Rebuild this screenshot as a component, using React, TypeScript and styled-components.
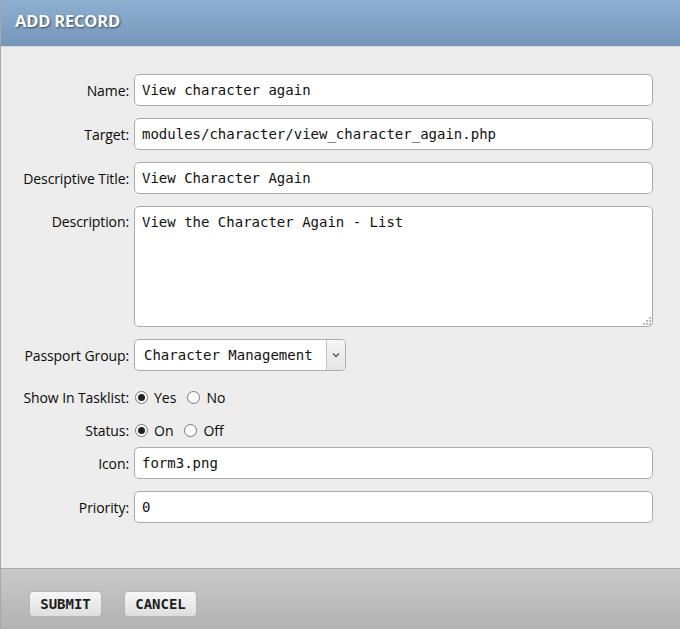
import styled, { createGlobalStyle } from "styled-components";

const GlobalStyle = createGlobalStyle`
    html, body {
        margin: 0;
        padding: 0;
        background: #ededed;
    }
    * {
        box-sizing: border-box;
    }
`

const Panel = styled.div`
    width: 680px;
    height: 629px;
    display: flex;
    flex-direction: column;
    border-left: 1px solid #a8a8a8;
    background: #ededed;
    overflow: hidden;
`

const Header = styled.div`
    height: 47px;
    flex: none;
    padding: 9px 0 0 14px;
    background: linear-gradient(to bottom, #8db0d2 0%, #7596b9 100%);
    border-bottom: 1px solid #d9d9d9;
    color: #fff;
    font-family: "Open Sans", sans-serif;
    font-weight: 700;
    font-size: 16.5px;
    letter-spacing: -0.2px;
    text-shadow: 1px 1px 2px rgba(0, 0, 0, 0.55);
`

const Body = styled.div`
    height: 521px;
    flex: none;
    padding: 27px 27px 0 0;
    display: flex;
    flex-direction: column;
`

const Row = styled.div<{ $top: number; $align?: string }>`
    display: flex;
    align-items: ${p => p.$align || 'center'};
    margin-top: ${p => p.$top}px;
`

const Label = styled.label<{ $pad?: number }>`
    width: 133px;
    flex: none;
    padding-right: 5px;
    padding-top: ${p => p.$pad || 0}px;
    text-align: right;
    font-family: "Open Sans", sans-serif;
    font-size: 14px;
    font-weight: 500;
    color: #0a0a0a;
    letter-spacing: -0.1px;
`

const mono = `"DejaVu Sans Mono", monospace`;

// single-line field drawn as a one-row textarea: Chrome's <input> clips
// the DejaVu Sans Mono underscore
const TextInput = styled.textarea`
    flex: 1;
    height: 32px;
    border: 1px solid #acacac;
    border-radius: 5px;
    background: #fff;
    padding: 6px 7px 0;
    line-height: 18px;
    font-family: ${mono};
    font-size: 14px;
    color: #111;
    outline: none;
    resize: none;
    overflow: hidden;
    white-space: nowrap;
`

const AreaWrap = styled.div`
    flex: 1;
    height: 121px;
    position: relative;
    display: flex;
`

const TextArea = styled.textarea`
    flex: 1;
    border: 1px solid #acacac;
    border-radius: 5px;
    background: #fff;
    padding: 7px 7px;
    font-family: ${mono};
    font-size: 14px;
    color: #111;
    outline: none;
    resize: none;
`

const Grip = styled.svg`
    position: absolute;
    right: 2px;
    bottom: 2px;
`

const SelectBox = styled.div`
    width: 212px;
    height: 32px;
    display: flex;
    border: 1px solid #acacac;
    border-radius: 5px;
    background: #fff;
    overflow: hidden;
`

const SelectText = styled.div`
    flex: 1;
    display: flex;
    align-items: center;
    padding-left: 9px;
    font-family: ${mono};
    font-size: 14px;
    color: #111;
`

const SelectArrow = styled.div`
    width: 19px;
    flex: none;
    display: flex;
    align-items: center;
    justify-content: center;
    border-left: 1px solid #c4c4c4;
    background: linear-gradient(to bottom, #f6f6f6, #e4e4e4);
`

const RadioGroup = styled.div`
    display: flex;
    align-items: center;
    height: 21px;
    font-family: "Open Sans", sans-serif;
    font-size: 14px;
    font-weight: 500;
    color: #0a0a0a;
`

const RadioOption = styled.label`
    display: flex;
    align-items: center;
    margin-right: 10px;
`

const Radio = styled.span<{ $on?: boolean }>`
    width: 13px;
    height: 13px;
    margin: 0 6px 0 1px;
    border-radius: 50%;
    border: 1px solid #767676;
    background: #fff;
    display: flex;
    align-items: center;
    justify-content: center;
    &::after {
        content: '';
        display: ${p => p.$on ? 'block' : 'none'};
        width: 7px;
        height: 7px;
        border-radius: 50%;
        background: #222;
    }
`

const Footer = styled.div`
    flex: 1;
    border-top: 1px solid #a9a9a9;
    background: linear-gradient(to bottom, #c9c9c9 0%, #b2b2b2 100%);
    display: flex;
    align-items: flex-start;
    gap: 22px;
    padding: 22px 0 0 28px;
`

const Button = styled.button`
    height: 26px;
    width: 73px;
    padding: 0;
    border: 1px solid #b5b5b5;
    border-radius: 4px;
    background: linear-gradient(to bottom, #f7f7f7 0%, #dedede 100%);
    font-family: ${mono};
    font-weight: 700;
    font-size: 14px;
    color: #1e1e1e;
    cursor: pointer;
`

const App = () => {
    return <>
        <GlobalStyle />
        <Panel>
            <Header>ADD RECORD</Header>
            <Body>
                <Row $top={0}>
                    <Label>Name:</Label>
                    <TextInput rows={1} defaultValue="View character again" />
                </Row>
                <Row $top={12}>
                    <Label>Target:</Label>
                    <TextInput rows={1} defaultValue="modules/character/view_character_again.php" />
                </Row>
                <Row $top={12}>
                    <Label>Descriptive Title:</Label>
                    <TextInput rows={1} defaultValue="View Character Again" />
                </Row>
                <Row $top={12} $align="flex-start">
                    <Label $pad={6}>Description:</Label>
                    <AreaWrap>
                        <TextArea defaultValue="View the Character Again - List" />
                        <Grip width="9" height="9" viewBox="0 0 9 9">
                            <rect x="7" y="1" width="2" height="2" fill="#bbb" />
                            <rect x="4" y="4" width="2" height="2" fill="#bbb" />
                            <rect x="7" y="4" width="2" height="2" fill="#bbb" />
                            <rect x="1" y="7" width="2" height="2" fill="#bbb" />
                            <rect x="4" y="7" width="2" height="2" fill="#bbb" />
                            <rect x="7" y="7" width="2" height="2" fill="#bbb" />
                        </Grip>
                    </AreaWrap>
                </Row>
                <Row $top={12}>
                    <Label>Passport Group:</Label>
                    <SelectBox>
                        <SelectText>Character Management</SelectText>
                        <SelectArrow>
                            <svg width="8" height="6" viewBox="0 0 8 6">
                                <path d="M1 1.5 L4 4.5 L7 1.5" fill="none" stroke="#555" strokeWidth="1.3" />
                            </svg>
                        </SelectArrow>
                    </SelectBox>
                </Row>
                <Row $top={16}>
                    <Label>Show In Tasklist:</Label>
                    <RadioGroup>
                        <RadioOption><Radio $on />Yes</RadioOption>
                        <RadioOption><Radio />No</RadioOption>
                    </RadioGroup>
                </Row>
                <Row $top={12}>
                    <Label>Status:</Label>
                    <RadioGroup>
                        <RadioOption><Radio $on />On</RadioOption>
                        <RadioOption><Radio />Off</RadioOption>
                    </RadioGroup>
                </Row>
                <Row $top={6}>
                    <Label>Icon:</Label>
                    <TextInput rows={1} defaultValue="form3.png" />
                </Row>
                <Row $top={12}>
                    <Label>Priority:</Label>
                    <TextInput rows={1} defaultValue="0" />
                </Row>
            </Body>
            <Footer>
                <Button>SUBMIT</Button>
                <Button>CANCEL</Button>
            </Footer>
        </Panel>
    </>
}

export default App;
